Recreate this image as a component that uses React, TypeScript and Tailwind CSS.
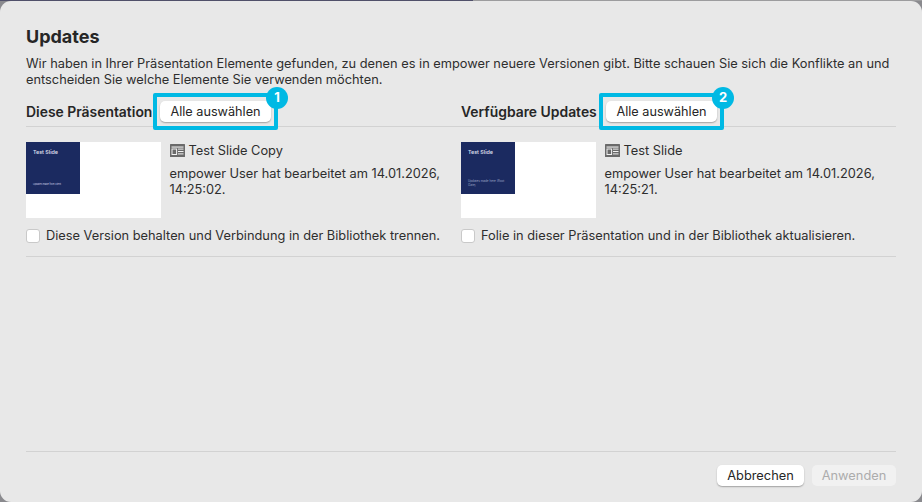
import React from 'react'

const font = { fontFamily: 'Inter, "Liberation Sans", sans-serif' }

function SlideIcon() {
  return (
    <svg width="15" height="13" viewBox="0 0 15 13" className="shrink-0">
      <rect x="0" y="0" width="15" height="13" rx="0.5" fill="#6a6a6a" />
      <rect x="1.5" y="2.5" width="12" height="1.1" fill="#f2f2f2" />
      <rect x="2" y="5" width="4.6" height="5.5" fill="none" stroke="#f2f2f2" strokeWidth="1" />
      <rect x="8" y="4.6" width="5.5" height="1" fill="#f2f2f2" />
      <rect x="8" y="7" width="5.5" height="1" fill="#f2f2f2" />
      <rect x="8" y="9.4" width="5.5" height="1" fill="#f2f2f2" />
    </svg>
  )
}

function SelectAll({ num }: { num: number }) {
  return (
    <div className="relative">
      <button className="block h-[21px] w-[111px] rounded-[5px] bg-white text-[12.7px] leading-[21px] text-[#262626] shadow-[0_1px_1.5px_rgba(0,0,0,0.3)]">
        Alle auswählen
      </button>
      <div className="absolute -left-[7px] -top-[8px] h-[37px] w-[125px] rounded-[2px] border-[4px] border-[#00b9e4]" />
      <div className="absolute -right-[17px] -top-[14px] flex h-[22px] w-[22px] items-center justify-center rounded-full bg-[#00b9e4] text-[13px] font-bold text-white">
        {num}
      </div>
    </div>
  )
}

function Thumb({ sub, small }: { sub: string; small?: boolean }) {
  return (
    <div className="h-[76px] w-[135px] shrink-0 bg-white">
      <div className="flex h-[52px] w-[54px] flex-col justify-between bg-[#1b2a60] pb-[7px] pl-[7px] pt-[6px] text-white">
        <div className="text-[5.3px] font-semibold leading-[8px] text-[#d9dcea]">Test Slide</div>
        <div className={small ? 'w-[44px] text-[3px] leading-[4px] text-[#9aa2c4]' : 'text-[2.3px] leading-[4px] text-[#c8cce0]'}>{sub}</div>
      </div>
    </div>
  )
}

function Column({ name, date, sub, check, small }: { name: string; date: string; sub: string; check: string; small?: boolean }) {
  return (
    <div>
      <div className="flex">
        <Thumb sub={sub} small={small} />
        <div className="ml-[8.5px] w-[275px]">
          <div className="mt-[2px] flex h-[13px] items-center gap-[4px] text-[12.8px] text-[#2e2e2e]">
            <SlideIcon />
            <span>{name}</span>
          </div>
          <p className="mt-[9px] text-[12.8px] leading-[16px] text-[#2e2e2e]">
            {`empower User hat bearbeitet am 14.01.2026, 14:25:${date}.`}
          </p>
        </div>
      </div>
      <label className="mt-[11px] flex h-[14px] items-center gap-[6px] text-[12.8px] text-[#2e2e2e]">
        <span className="h-[14px] w-[14px] shrink-0 rounded-[3px] border border-[#c9c9c9] bg-white" />
        <span className="whitespace-nowrap">{check}</span>
      </label>
    </div>
  )
}

export default function App() {
  return (
    <div className="h-[502px] w-[922px] overflow-hidden bg-[#8a8a8e]" style={font}>
      <div className="flex h-[1px] w-full">
        <div className="w-[473px] bg-[#50506a]" />
        <div className="flex-1 bg-[#9c9c9e]" />
      </div>
      <div className="flex h-[501px] flex-col rounded-[11px] bg-[#e8e8e8] px-[26px]">
        <h1 className="mt-[25px] text-[18px] font-bold leading-[22px] text-[#262626]">Updates</h1>
        <p className="mt-[8px] text-[12.8px] leading-[16px] text-[#2e2e2e]">
          Wir haben in Ihrer Präsentation Elemente gefunden, zu denen es in empower neuere Versionen gibt. Bitte schauen Sie sich die Konflikte an und entscheiden Sie welche Elemente Sie verwenden möchten.
        </p>

        <div className="mt-[13px] flex h-[26px] items-start border-b border-[#d2d2d2]">
          <div className="flex w-[435px] items-start">
            <span className="mt-[1px] w-[134px] text-[13.9px] font-semibold leading-[21px] text-[#262626]">Diese Präsentation</span>
            <SelectAll num={1} />
          </div>
          <div className="flex items-start">
            <span className="mt-[1px] w-[145px] text-[13.9px] font-semibold leading-[21px] text-[#262626]">Verfügbare Updates</span>
            <SelectAll num={2} />
          </div>
        </div>

        <div className="mt-[15px] grid grid-cols-[435px_1fr] border-b border-[#d2d2d2] pb-[13px]">
          <Column name="Test Slide Copy" date="02" sub="Updates made from client" check="Diese Version behalten und Verbindung in der Bibliothek trennen." />
          <Column name="Test Slide" date="21" sub="Updates made here (Root Gate)" small check="Folie in dieser Präsentation und in der Bibliothek aktualisieren." />
        </div>

        <div className="mt-auto flex h-[51px] items-start justify-end gap-[8px] border-t border-[#d2d2d2] pt-[13px]">
          <button className="h-[21px] w-[87px] rounded-[5px] bg-white text-[12.8px] leading-[21px] text-[#262626] shadow-[0_1px_1.5px_rgba(0,0,0,0.3)]">
            Abbrechen
          </button>
          <button className="h-[21px] w-[84px] rounded-[5px] bg-[#f1f1f1] text-[12.8px] leading-[21px] text-[#acacac]">
            Anwenden
          </button>
        </div>
      </div>
    </div>
  )
}
